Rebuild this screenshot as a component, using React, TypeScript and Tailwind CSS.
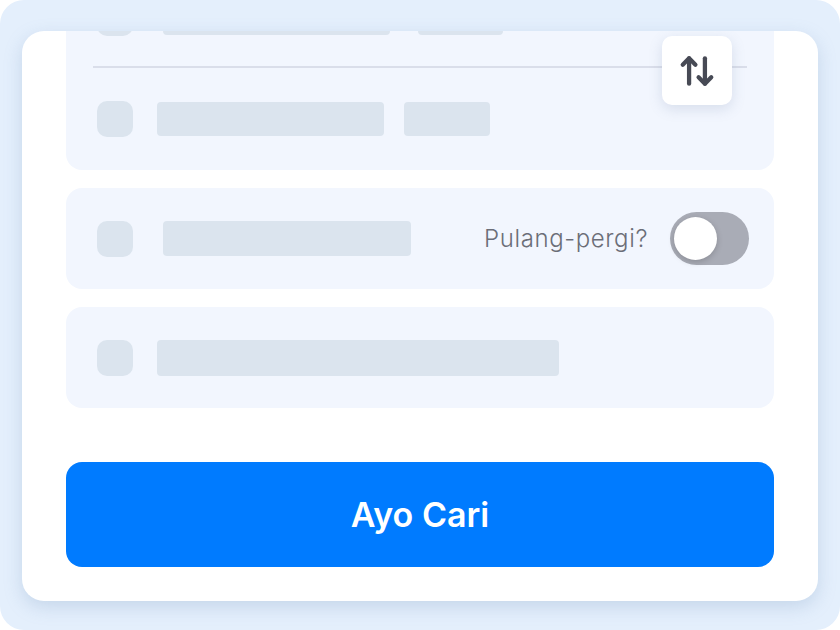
import { ArrowUpDown } from 'lucide-react';

function Bone({ className }: { className: string }) {
  return <div className={`bg-[#dbe4ee] ${className}`} />;
}

export default function App() {
  return (
    <div className="w-[840px] h-[630px] bg-white" style={{ fontFamily: 'Inter, "Noto Sans", sans-serif' }}>
      <div className="w-full h-full bg-[#e4effc] rounded-[24px] pt-[31px] px-[22px]">
        <div className="h-[570px] bg-white rounded-[22px] overflow-hidden shadow-[0_6px_18px_rgba(120,150,190,0.28)] px-[44px] pb-[34px] flex flex-col">
          {/* Route box, scrolled partly out of view */}
          <div className="relative -mt-[64px] bg-[#f2f6fe] rounded-[16px] pt-[33px] pb-[33px] px-[31px]">
            <div className="flex items-center">
              <Bone className="w-[36px] h-[36px] rounded-[10px]" />
              <Bone className="ml-[30px] w-[227px] h-[34px] rounded-[4px]" />
              <Bone className="ml-[28px] w-[85px] h-[34px] rounded-[4px]" />
            </div>
            <div className="-mx-[4px] mt-[30px] mb-[33px] h-[2px] bg-[#dadeea]" />
            <div className="flex items-center">
              <Bone className="w-[36px] h-[36px] rounded-[10px]" />
              <Bone className="ml-[24px] w-[227px] h-[34px] rounded-[4px]" />
              <Bone className="ml-[20px] w-[86px] h-[34px] rounded-[4px]" />
            </div>
            <button className="absolute right-[42px] top-[69px] w-[70px] h-[69px] bg-white rounded-[10px] shadow-[0_4px_14px_rgba(90,110,150,0.18)] flex items-center justify-center">
              <ArrowUpDown size={38} strokeWidth={2.7} color="#474a55" />
            </button>
          </div>

          {/* Date + round trip */}
          <div className="mt-[18px] h-[101px] bg-[#f2f6fe] rounded-[16px] pl-[31px] pr-[25px] flex items-center">
            <Bone className="w-[36px] h-[36px] rounded-[10px]" />
            <Bone className="ml-[30px] w-[248px] h-[35px] rounded-[4px]" />
            <span className="ml-auto text-[24px] font-light text-[#6b6e78] tracking-[0.6px]">Pulang-pergi?</span>
            <div className="ml-[22px] w-[79px] h-[53px] rounded-full bg-[#a9acb6] p-[4px] flex items-center">
              <div className="w-[43px] h-[43px] rounded-full bg-white shadow-[0_2px_6px_rgba(0,0,0,0.18)]" />
            </div>
          </div>

          {/* Passengers */}
          <div className="mt-[18px] h-[101px] bg-[#f2f6fe] rounded-[16px] px-[31px] flex items-center">
            <Bone className="w-[36px] h-[36px] rounded-[10px]" />
            <Bone className="ml-[24px] w-[402px] h-[36px] rounded-[4px]" />
          </div>

          <button className="mt-auto h-[105px] w-full bg-[#007bff] rounded-[16px] text-white text-[34px] font-semibold">
            Ayo Cari
          </button>
        </div>
      </div>
    </div>
  );
}
